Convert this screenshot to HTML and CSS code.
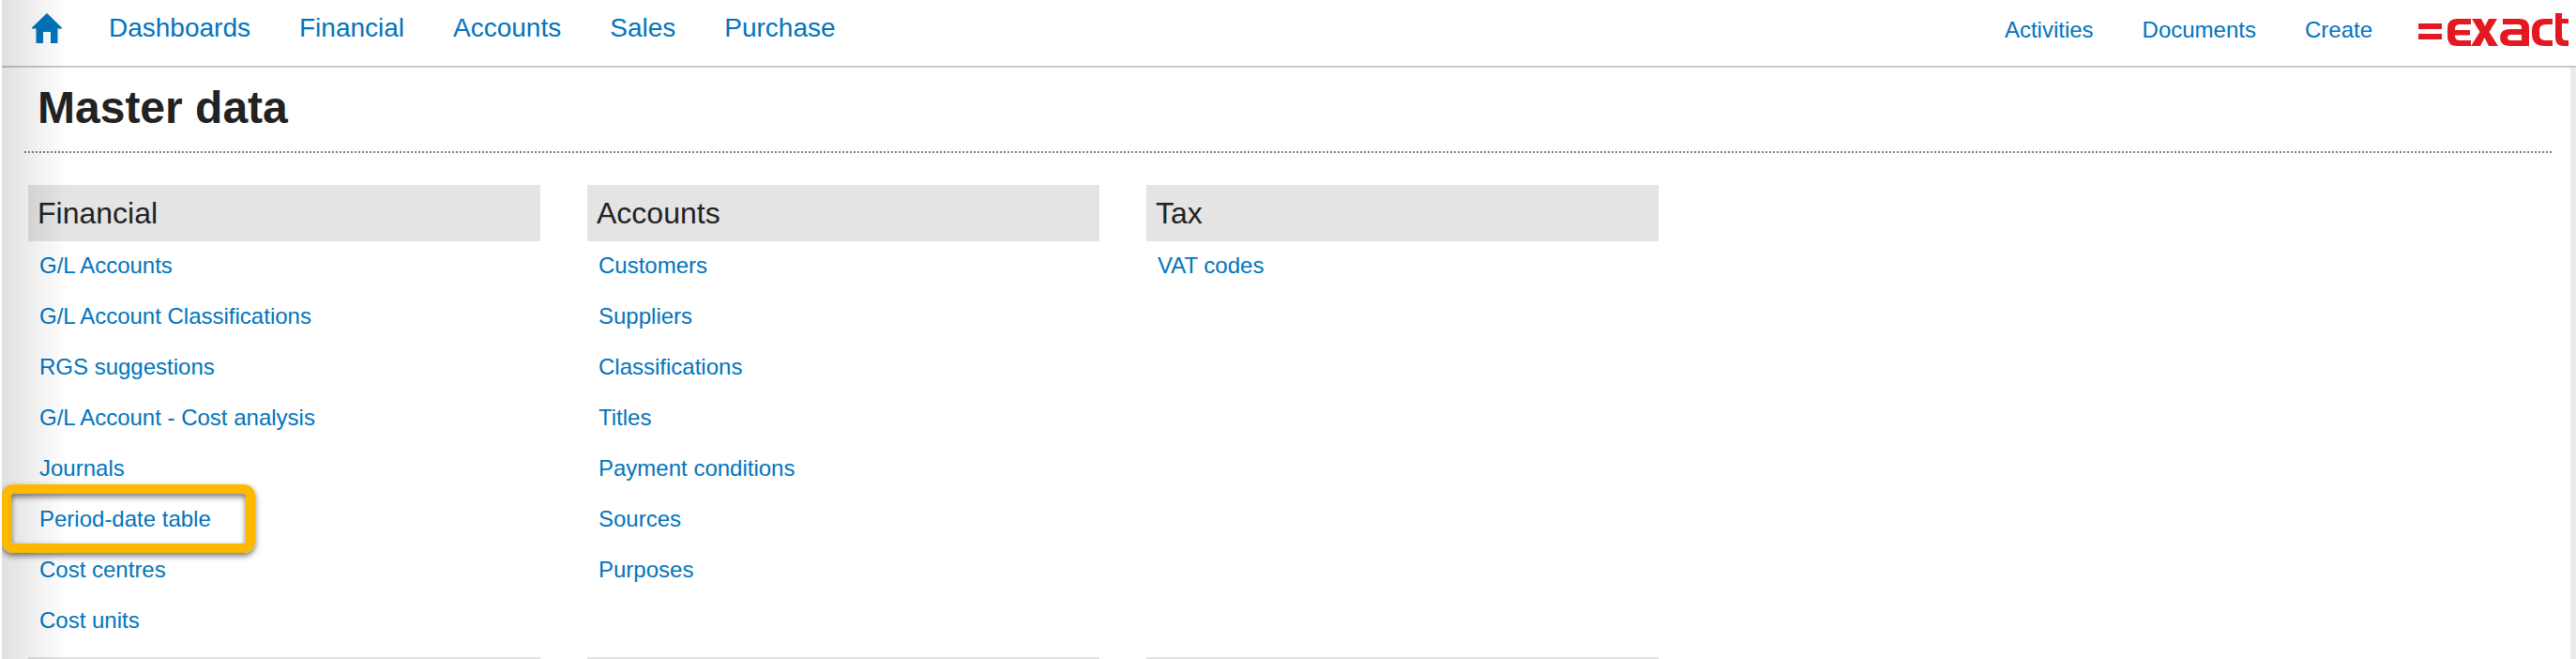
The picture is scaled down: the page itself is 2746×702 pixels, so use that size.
FILE: index.html
```html
<!DOCTYPE html>
<html lang="en">
<head>
<meta charset="utf-8">
<title>Master data</title>
<link rel="stylesheet" href="styles.css">
</head>
<body>
<header class="topbar">
  <nav class="nav-main">
    <a class="home" href="#" aria-label="Home">
      <svg width="32" height="32" viewBox="0 0 32 32"><path fill="#0174bd" d="M16 0 L32 15.500 L32 16.500 L27.500 16.500 L27.500 32 L20 32 L20 20 L12 20 L12 32 L4.500 32 L4.500 16.500 L0 16.500 L0 15.500 Z"/></svg>
    </a>
    <a href="#">Dashboards</a>
    <a href="#">Financial</a>
    <a href="#">Accounts</a>
    <a href="#">Sales</a>
    <a href="#">Purchase</a>
  </nav>
  <nav class="nav-side">
    <a href="#">Activities</a>
    <a href="#">Documents</a>
    <a class="last" href="#">Create</a>
    <svg class="logo" width="160" height="35" viewBox="0 0 160 35" aria-label="Exact logo">
      <g fill="#e31820" fill-rule="evenodd">
        <rect x="0" y="11" width="25" height="6"/>
        <rect x="0" y="22" width="25" height="6"/>
        <path d="M56 6 H41 Q31 6 31 16 V25 Q31 35 41 35 H56 V29 H44 Q39 29 39 24 V23.500 H55 V18 H39 V17 Q39 12 44 12 H56 Z"/>
        <path d="M57 6 H67 L71 14 L75 6 H84 L75.500 20 L85 35 H75 L70.500 26 L66 35 H56 L65.500 20 Z"/>
        <path d="M90 6 H108 Q118 6 118 16 V35 H98 Q87 35 87 26 Q87 17 98 17 H110 V15 Q110 12 106 12 H90 Z M99 23 Q95 23 95 26 Q95 29 99 29 H110 V23 Z"/>
        <path d="M135 6 H143 V12 H136 Q129 12 129 18 V23 Q129 29 136 29 H143 V35 H135 Q121 35 121 22 V19 Q121 6 135 6 Z"/>
        <path d="M146 0 H153 V6 H160 V11 H153 V24 Q153 29 157 29 H160 V35 H155 Q146 35 146 26 Z"/>
      </g>
    </svg>
  </nav>
</header>
<main class="page">
  <h1 class="title">Master data</h1>
  <div class="columns">
    <section class="col">
      <h2>Financial</h2>
      <ul>
        <li><a href="#">G/L Accounts</a></li>
        <li><a href="#">G/L Account Classifications</a></li>
        <li><a href="#">RGS suggestions</a></li>
        <li><a href="#">G/L Account - Cost analysis</a></li>
        <li><a href="#">Journals</a></li>
        <li class="marked"><a href="#">Period-date table</a></li>
        <li><a href="#">Cost centres</a></li>
        <li><a href="#">Cost units</a></li>
      </ul>
    </section>
    <section class="col">
      <h2>Accounts</h2>
      <ul>
        <li><a href="#">Customers</a></li>
        <li><a href="#">Suppliers</a></li>
        <li><a href="#">Classifications</a></li>
        <li><a href="#">Titles</a></li>
        <li><a href="#">Payment conditions</a></li>
        <li><a href="#">Sources</a></li>
        <li><a href="#">Purposes</a></li>
      </ul>
    </section>
    <section class="col">
      <h2>Tax</h2>
      <ul>
        <li><a href="#">VAT codes</a></li>
      </ul>
    </section>
  </div>
</main>
</body>
</html>
```
FILE: styles.css
```css
* { box-sizing: border-box; }
html, body { margin: 0; padding: 0; height: 702px; overflow: hidden; }
body {
  background: #fff;
  font-family: "Liberation Sans", Arial, sans-serif;
  position: relative;
  border-left: 2px solid #fff;
}
body::after {
  content: "";
  position: absolute;
  left: 0; top: 0; bottom: 0;
  width: 70px;
  background: linear-gradient(to right, rgba(0,0,0,.12), rgba(0,0,0,0));
  pointer-events: none;
}
a { color: #0174bd; text-decoration: none; }
.topbar {
  height: 72px;
  border-bottom: 2px solid #c9c9c9;
  display: flex;
  justify-content: space-between;
}
.nav-main { display: flex; align-items: flex-start; padding-left: 32px; }
.nav-main a { font-size: 28px; line-height: 30px; margin-top: 15px; margin-right: 52px; }
.nav-main a.home { height: 32px; margin-top: 14px; margin-right: 50px; }
.nav-side { display: flex; align-items: flex-start; padding-right: 8px; }
.nav-side a { font-size: 24px; line-height: 28px; margin-top: 18px; margin-right: 52px; }
.nav-side a.last { margin-right: 49px; }
.logo { margin-top: 14px; }
.page { position: relative; height: 630px; padding: 0 26px 0 24px; overflow: hidden; }
.page::after {
  content: "";
  position: absolute;
  right: 0; top: 0; bottom: 0;
  width: 6px;
  background: #ececec;
}
.title {
  margin: 0;
  height: 91px;
  padding: 17px 0 0 14px;
  font-size: 48px;
  line-height: 52px;
  font-weight: 700;
  color: #222;
  border-bottom: 2px dotted #6d8792;
}
.columns { display: flex; gap: 50px; margin-top: 34px; padding-left: 4px; }
.col { width: 546px; height: 505px; border-bottom: 2px solid #e2e2e2; }
.col h2 {
  margin: 0;
  height: 60px;
  padding-left: 10px;
  background: #e4e4e4;
  font-size: 32px;
  font-weight: 400;
  line-height: 60px;
  color: #222;
}
.col ul { list-style: none; margin: 7px 0 0; padding: 0 0 0 12px; }
.col li { height: 54px; font-size: 24px; line-height: 38px; }
.col li.marked { position: relative; }
.col li.marked::after {
  content: "";
  box-sizing: border-box;
  position: absolute;
  z-index: 2;
  left: -40px; top: -18px;
  width: 270px; height: 73px;
  border: 10px solid #fdb800;
  border-radius: 12px;
  box-shadow: 0 3px 6px rgba(0,0,0,.55), inset 0 3px 6px rgba(0,0,0,.55);
}
```
